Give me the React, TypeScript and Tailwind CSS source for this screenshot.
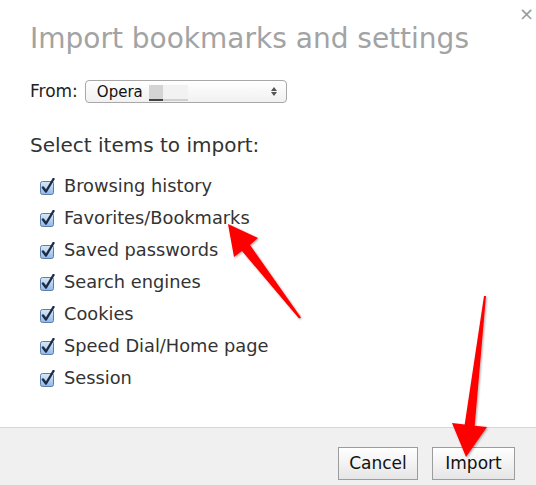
import React from "react";

const items = [
  "Browsing history",
  "Favorites/Bookmarks",
  "Saved passwords",
  "Search engines",
  "Cookies",
  "Speed Dial/Home page",
  "Session",
];

function Check() {
  return (
    <svg width="16" height="18" viewBox="0 0 16 18" className="shrink-0">
      <defs>
        <linearGradient id="cbg" x1="0" y1="0" x2="0" y2="1">
          <stop offset="0" stopColor="#dbe9f8" />
          <stop offset="1" stopColor="#8fb8e6" />
        </linearGradient>
      </defs>
      <rect x="0.5" y="3.5" width="13" height="13" rx="2" fill="url(#cbg)" stroke="#5d7ea8" />
      <path d="M3 9.5 L6 13.5 L13.5 1" fill="none" stroke="#1c2b45" strokeWidth="2.4" strokeLinecap="round" strokeLinejoin="round" />
    </svg>
  );
}

export default function App() {
  return (
    <div
      className="relative w-[536px] h-[485px] bg-white overflow-hidden flex flex-col"
      style={{ fontFamily: '"DejaVu Sans", "Liberation Sans", sans-serif' }}
    >
      <div className="absolute right-[2px] top-[5px] text-[18px] leading-[18px] text-[#9a9a9a]">×</div>
      <div className="flex-1 flex flex-col pl-[30px]">
        <div className="pt-[23px] text-[28px] leading-[32px] text-[#a3a3a3]">Import bookmarks and settings</div>
        <div className="mt-[24px] flex items-center gap-[7px]">
          <span className="text-[17px] text-[#222]">From:</span>
          <div className="w-[202px] h-[23px] rounded-[4px] border border-[#a8a8a8] bg-gradient-to-b from-white to-[#f1f1f1] flex items-center pl-[11px] pr-[9px]">
            <span className="text-[15px] text-[#111]">Opera</span>
            <div className="ml-[6px] flex h-[16px] mt-[2px]">
              <div className="w-[14px] flex flex-col">
                <div className="flex-1 bg-[#d4d4d4]" />
                <div className="h-[2px] bg-[#444]" />
              </div>
              <div className="w-[25px] flex flex-col">
                <div className="flex-1 bg-[#f2f2f2]" />
                <div className="h-[2px] bg-[#cfcfcf]" />
              </div>
            </div>
            <div className="ml-auto flex flex-col items-center gap-[1px]">
              <svg width="6" height="4" viewBox="0 0 6 4"><path d="M0 4 L3 0 L6 4Z" fill="#555" /></svg>
              <svg width="6" height="4" viewBox="0 0 6 4"><path d="M0 0 L3 4 L6 0Z" fill="#555" /></svg>
            </div>
          </div>
        </div>
        <div className="mt-[28px] text-[20px] leading-[24px] text-[#333]">Select items to import:</div>
        <div className="mt-[20px] pl-[10px] flex flex-col gap-[12px]">
          {items.map((t) => (
            <div key={t} className="flex items-center gap-[8px] h-[20px]">
              <Check />
              <span className="text-[17.8px] text-[#333]">{t}</span>
            </div>
          ))}
        </div>
      </div>
      <div className="h-[58px] border-t border-[#d6d6d6] bg-[#f0f0f0] flex items-center justify-end gap-[14px] pr-[21px] pt-[14px]">
        <button className="w-[80px] h-[33px] border border-[#9c9c9c] bg-gradient-to-b from-white to-[#e6e6e6] text-[17px] text-[#111]">Cancel</button>
        <button className="w-[83px] h-[33px] border border-[#9c9c9c] bg-gradient-to-b from-white to-[#e6e6e6] text-[17px] text-[#111]">Import</button>
      </div>
      <svg className="absolute inset-0 pointer-events-none" width="536" height="485" viewBox="0 0 536 485">
        <defs>
          <filter id="sh" x="-20%" y="-20%" width="140%" height="140%">
            <feDropShadow dx="1" dy="1" stdDeviation="1" floodColor="#000" floodOpacity="0.35" />
          </filter>
        </defs>
        <polygon
          filter="url(#sh)"
          fill="#ff0000"
          points="228,224 258,238 250,245 301,317.5 299,318.5 242,251 234,257"
        />
        <polygon
          filter="url(#sh)"
          fill="#ff0000"
          points="466,457 487,427 474.7,425.8 486,296 484,296 464.7,424.6 452,423"
        />
      </svg>
    </div>
  );
}
